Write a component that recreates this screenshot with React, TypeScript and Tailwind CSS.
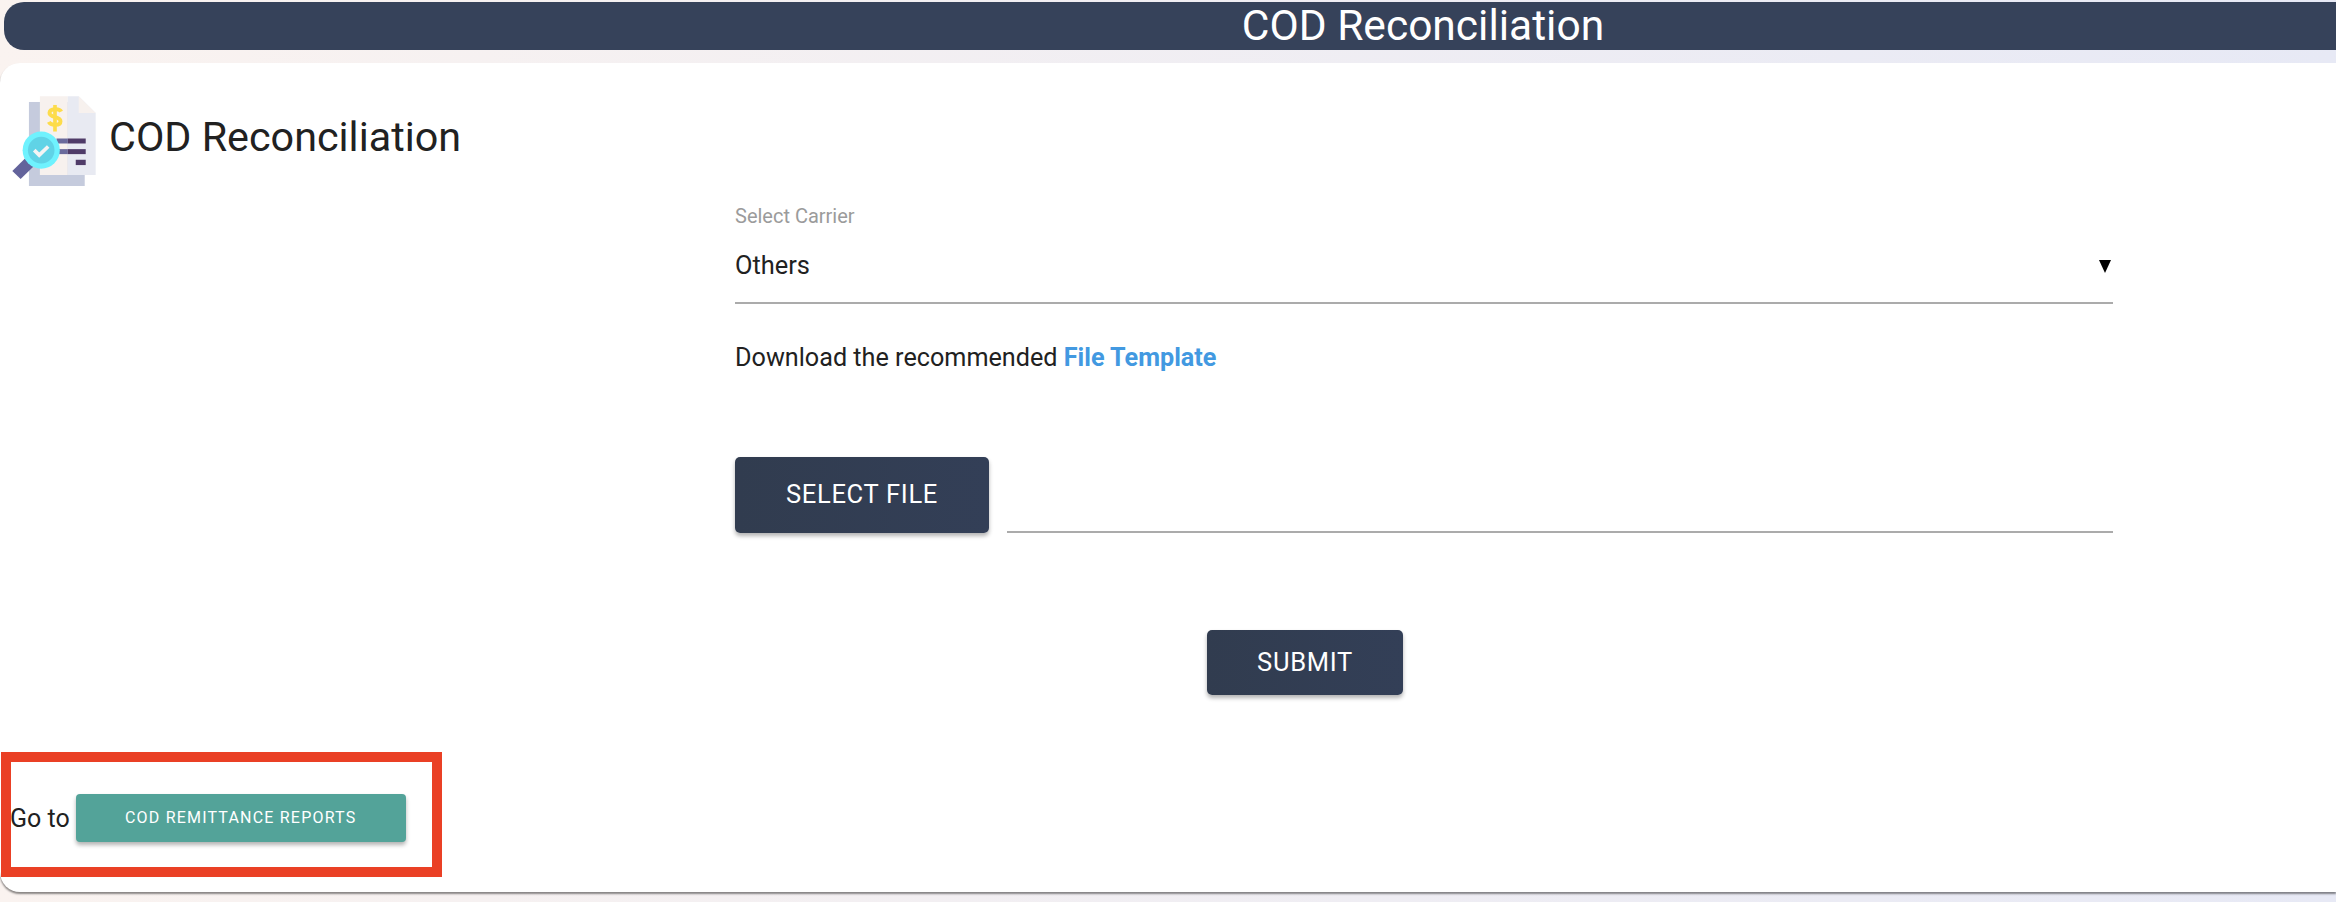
const darkButton =
  'rounded-[5px] bg-gradient-to-r from-[#313c4f] to-[#333f57] text-[25.5px] leading-none tracking-[0.7px] text-white shadow-[0_3px_4px_rgba(0,0,0,0.3)]'

function ReconciliationIcon() {
  return (
    <svg viewBox="30 75 265 275" className="h-[92px] w-[88px] shrink-0">
      <rect x="87" y="95" width="168" height="253" fill="#c5cbdd" />
      <path d="M120 78H204V315H120Z" fill="#f7f1ee" />
      <path d="M204 78H237L288 128V315H204Z" fill="#e8eaf2" />
      <path d="M237 78L288 128H237Z" fill="#f7f1ee" />
      {/* dollar sign */}
      <path
        d="M184 124C180 115 150 113 149 128C148 143 182 137 182 153C182 168 152 166 147 155"
        fill="none"
        stroke="#fddc4b"
        strokeWidth="12"
      />
      <rect x="160" y="104" width="11" height="80" fill="#fddc4b" />
      {/* list lines */}
      <rect x="170" y="205" width="34" height="15" fill="#6a6a9c" />
      <rect x="204" y="205" width="54" height="15" fill="#4f3b68" />
      <rect x="170" y="237" width="34" height="15" fill="#6a6a9c" />
      <rect x="204" y="237" width="54" height="15" fill="#4f3b68" />
      <rect x="228" y="269" width="30" height="16" fill="#4f3b68" />
      {/* magnifier */}
      <path d="M37 303L62 327L100 290L75 265Z" fill="#63639b" />
      <circle cx="124" cy="240" r="56" fill="#6ff2fe" />
      <circle cx="124" cy="240" r="40" fill="#60d3e6" />
      <path d="M103 240L118 255L145 229" fill="none" stroke="#f4f4f4" strokeWidth="11" />
    </svg>
  )
}

export default function App() {
  return (
    <div className="relative h-[902px] w-full overflow-hidden bg-gradient-to-r from-[#faf3f0] to-[#e7e9f5] pt-[2px] font-['Roboto',sans-serif] text-[#212121]">
      {/* Page title bar */}
      <header className="ml-[4px] flex h-12 items-center justify-center rounded-l-[20px] bg-[#36425a] pl-[506px] text-[42.5px] leading-none text-white">
        COD Reconciliation
      </header>

      {/* Main card */}
      <main className="mt-[13px] flex h-[829px] flex-col rounded-l-[20px] bg-white shadow-[0_2px_2px_rgba(0,0,0,0.45)]">
        <div className="flex items-center gap-[11px] pt-[32px] pl-[10px]">
          <ReconciliationIcon />
          <h1 className="-mt-[6px] text-[41.3px] leading-none font-normal">COD Reconciliation</h1>
        </div>

        <form className="mt-[19px] ml-[735px] flex w-[1378px] flex-col">
          <label className="text-[20px] leading-[21px] text-[#9b9b9b]">Select Carrier</label>
          <div className="mt-[14px] flex h-[63px] items-start justify-between border-b-2 border-[#ababab] pt-[10px]">
            <span className="text-[25.4px] leading-[28px]">Others</span>
            <span className="mt-[9px] mr-[2px] h-0 w-0 border-x-[6px] border-t-[13px] border-x-transparent border-t-black" />
          </div>

          <p className="mt-[40px] text-[25.2px] leading-[28px]">
            Download the recommended <a className="font-bold text-[#4299e1]">File Template</a>
          </p>

          <div className="mt-[85px] flex items-end gap-[18px]">
            <button type="button" className={`h-[76px] w-[254px] ${darkButton}`}>
              SELECT FILE
            </button>
            <div className="flex-1 border-b-2 border-[#ababab]" />
          </div>

          <div className="mt-[97px] flex justify-center pr-[238px]">
            <button type="button" className={`h-[65px] w-[196px] ${darkButton}`}>
              SUBMIT
            </button>
          </div>
        </form>

        <div className="mt-[99px] flex items-center pl-[10px]">
          <span className="text-[25px] leading-none">Go to</span>
          <button
            type="button"
            className="ml-[6px] h-[48px] w-[330px] rounded-[4px] bg-[#53a399] text-[16px] leading-none tracking-[1.2px] text-white shadow-[0_3px_4px_rgba(0,0,0,0.3)]"
          >
            COD REMITTANCE REPORTS
          </button>
        </div>
      </main>

      {/* Red annotation box drawn over the screenshot */}
      <div className="absolute top-[752px] left-[1px] h-[125px] w-[441px] border-[10px] border-[#ea4025]" />
    </div>
  )
}
